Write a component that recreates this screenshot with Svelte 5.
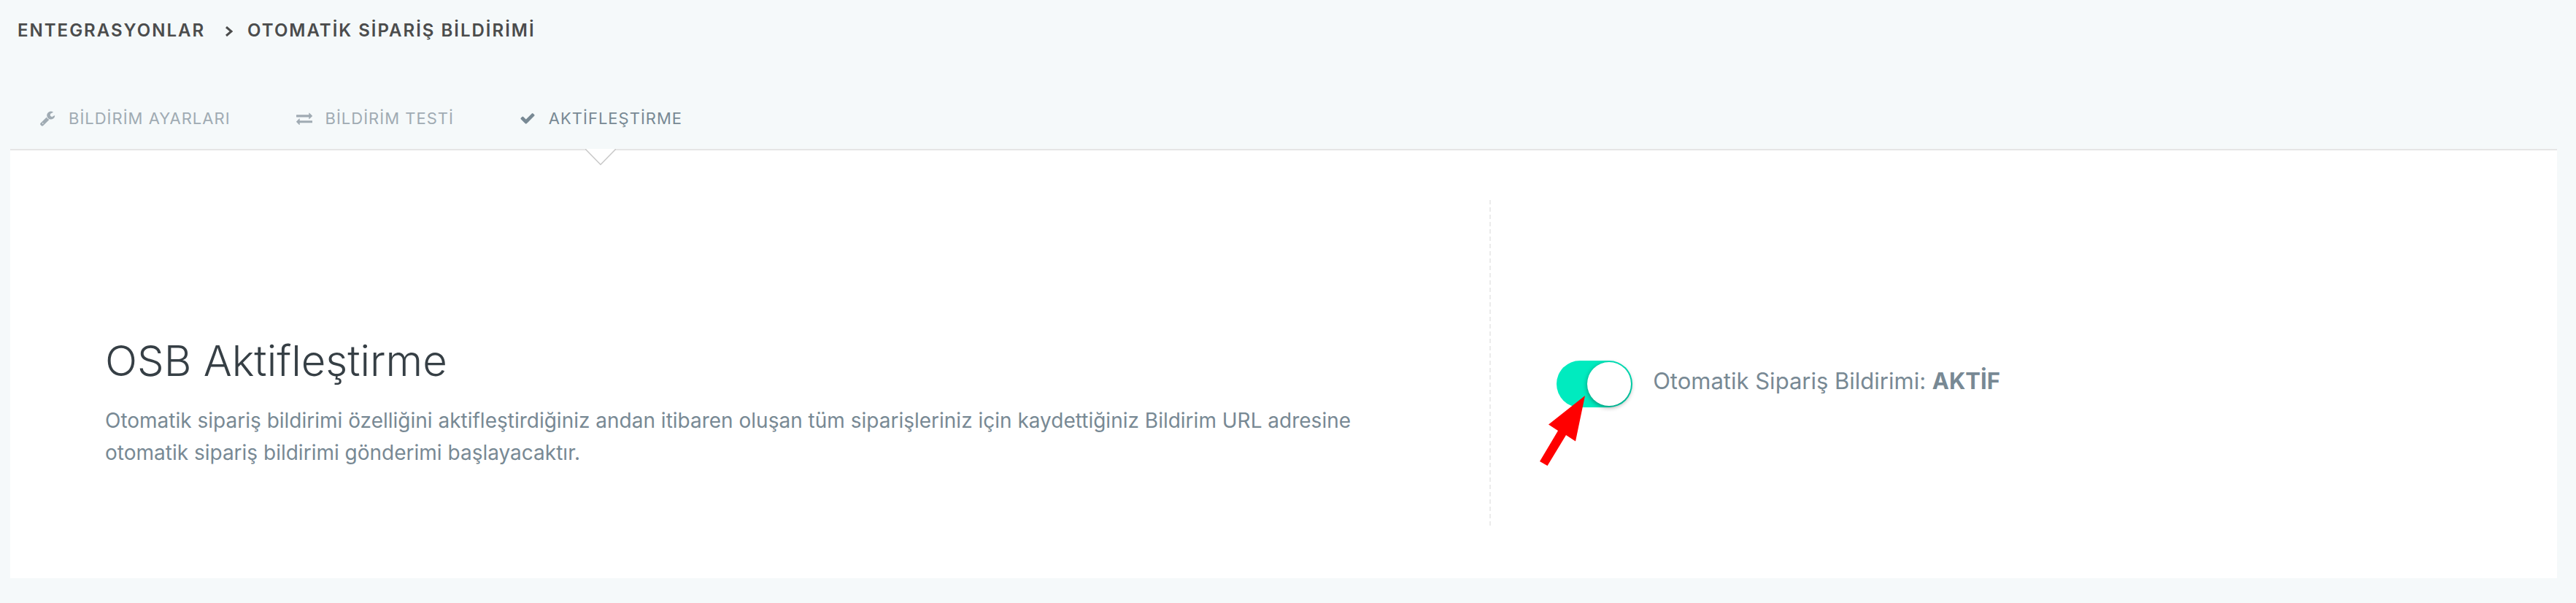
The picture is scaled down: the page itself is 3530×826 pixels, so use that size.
<script>
  let active = true;
  let current = "activate";

  const tabs = [
    {
      id: "settings",
      label: "BİLDİRİM AYARLARI",
      icon: "M448 1472q0-26-19-45t-45-19-45 19-19 45 19 45 45 19 45-19 19-45zm644-420l-682 682q-37 37-90 37-52 0-91-37l-106-108q-38-36-38-90 0-53 38-91l681-681q39 98 114.500 173.500t173.500 114.500zm634-435q0 39-23 106-47 134-164.500 217.500t-258.500 83.500q-185 0-316.500-131.500t-131.500-316.500 131.500-316.500 316.500-131.500q58 0 121.500 16.500t107.500 46.500q16 11 16 28t-16 28l-293 169v224l193 107q5-3 79-48.500t135.500-81 70.500-35.500q15 0 23.500 10t8.500 25z",
    },
    {
      id: "test",
      label: "BİLDİRİM TESTİ",
      icon: "M1792 1184v192q0 13-9.500 22.500t-22.500 9.500h-1376v192q0 13-9.500 22.500t-22.500 9.500q-12 0-24-10l-319-320q-9-9-9-22 0-14 9-23l320-320q9-9 23-9 13 0 22.500 9.500t9.500 22.500v192h1376q13 0 22.500 9.500t9.500 22.500zm0-544q0 14-9 23l-320 320q-9 9-23 9-13 0-22.500-9.500t-9.500-22.500v-192h-1376q-13 0-22.500-9.500t-9.500-22.500v-192q0-13 9.500-22.500t22.500-9.500h1376v-192q0-14 9-23t23-9q12 0 24 10l319 319q9 9 9 23z",
    },
    {
      id: "activate",
      label: "AKTİFLEŞTİRME",
      icon: "M1671 566q0 40-28 68l-724 724-136 136q-28 28-68 28t-68-28l-136-136-362-362q-28-28-28-68t28-68l136-136q28-28 68-28t68 28l294 295 656-657q28-28 68-28t68 28l136 136q28 28 28 68z",
    },
  ];
</script>

<nav class="breadcrumb">
  <a href="#entegrasyonlar">ENTEGRASYONLAR</a>
  <svg class="chevron" viewBox="0 0 10 14">
    <path d="M1 1L8 7l-7 6" />
  </svg>
  <span>OTOMATİK SİPARİŞ BİLDİRİMİ</span>
</nav>

<div class="tabs">
  {#each tabs as tab}
    <button
      type="button"
      class="tab"
      class:current={tab.id === current}
      on:click={() => (current = tab.id)}
    >
      <svg class="icon" viewBox="0 0 1792 1792"><path d={tab.icon} /></svg>
      <span>{tab.label}</span>
      {#if tab.id === current}
        <svg class="notch" viewBox="0 0 44 23">
          <path class="fill" d="M0 0H44L22 22z" />
          <path class="line" d="M1 0L22 21.500L43 0" />
        </svg>
      {/if}
    </button>
  {/each}
</div>

<main class="panel">
  <section class="info">
    <h1>OSB Aktifleştirme</h1>
    <p>
      Otomatik sipariş bildirimi özelliğini aktifleştirdiğiniz andan itibaren
      oluşan tüm siparişleriniz için kaydettiğiniz Bildirim URL adresine
      otomatik sipariş bildirimi gönderimi başlayacaktır.
    </p>
  </section>
  <section class="control">
    <div class="switch">
      <input type="checkbox" id="osb" bind:checked={active} />
      <svg class="pointer" viewBox="0 0 62 96">
        <path d="M62 0L49 62.500L36 54L10.500 96L0 90L25 48L12 39.500z" />
      </svg>
    </div>
    <label for="osb">
      Otomatik Sipariş Bildirimi: <strong>{active ? "AKTİF" : "PASİF"}</strong>
    </label>
  </section>
</main>

<style>
  :global(body) {
    background: #f5f9fa;
    color: #788994;
    font-family: Inter, "Liberation Sans", sans-serif;
  }

  .breadcrumb {
    display: flex;
    align-items: center;
    padding: 24px 24px 0;
    font-size: 24px;
    font-weight: 600;
    line-height: 36px;
    letter-spacing: 2px;
    color: #4b4c4c;
  }

  .breadcrumb a {
    color: inherit;
    text-decoration: none;
  }

  .chevron {
    width: 10px;
    height: 14px;
    margin: 2px 20px 0 28px;
    fill: none;
    stroke: #4b4c4c;
    stroke-width: 3;
  }

  .tabs {
    display: flex;
    gap: 10px;
    padding: 60px 14px 0;
  }

  .tab {
    position: relative;
    display: flex;
    align-items: center;
    gap: 18px;
    height: 84px;
    padding: 0 40px;
    border: 0;
    background: none;
    color: #a0abb3;
    font: 400 22px/32px Inter, "Liberation Sans", sans-serif;
    letter-spacing: 1px;
    cursor: pointer;
  }

  .tab.current {
    color: #788994;
  }

  .icon {
    width: 22px;
    height: 22px;
    fill: currentColor;
  }

  /* sits over the top border of the panel */
  .notch {
    position: absolute;
    top: 100%;
    left: calc(50% - 22px);
    width: 44px;
    height: 23px;
  }

  .notch .fill {
    fill: #fff;
  }

  .notch .line {
    fill: none;
    stroke: #c8c8c8;
    stroke-width: 1.500;
  }

  .panel {
    display: grid;
    grid-template-columns: 7fr 5fr;
    margin: 0 26px 34px 14px;
    padding: 68px 40px 72px;
    border-top: 2px solid #e5e5e5;
    background: #fff;
  }

  .info {
    padding: 184px 90px 78px;
    background: repeating-linear-gradient(
        to bottom,
        #ebebeb 0 6px,
        transparent 6px 10px
      )
      right / 2px 100% no-repeat;
  }

  h1 {
    margin: 0 0 24px;
    color: #363f45;
    font-size: 58px;
    font-weight: 300;
    line-height: 72px;
  }

  p {
    margin: 0;
    font-size: 28px;
    line-height: 44px;
  }

  .control {
    display: flex;
    align-items: flex-start;
    gap: 28px;
    padding: 220px 90px 0;
  }

  .switch {
    position: relative;
  }

  .switch input {
    display: block;
    width: 104px;
    height: 64px;
    margin: 0;
    padding: 2px;
    box-sizing: border-box;
    appearance: none;
    border-radius: 32px;
    background: #dfe3e6;
    cursor: pointer;
  }

  .switch input::before {
    content: "";
    display: block;
    width: 60px;
    height: 60px;
    border-radius: 50%;
    background: #fff;
    box-shadow: 0 2px 6px rgba(0, 0, 0, 0.4);
  }

  .switch input:checked {
    background: #00ebbf;
  }

  .switch input:checked::before {
    margin-left: 40px;
  }

  .pointer {
    position: absolute;
    top: 48px;
    right: 65px;
    width: 62px;
    height: 96px;
    fill: #f00;
    pointer-events: none;
  }

  label {
    font-size: 31px;
    line-height: 56px;
  }

  strong {
    font-weight: 700;
  }
</style>
